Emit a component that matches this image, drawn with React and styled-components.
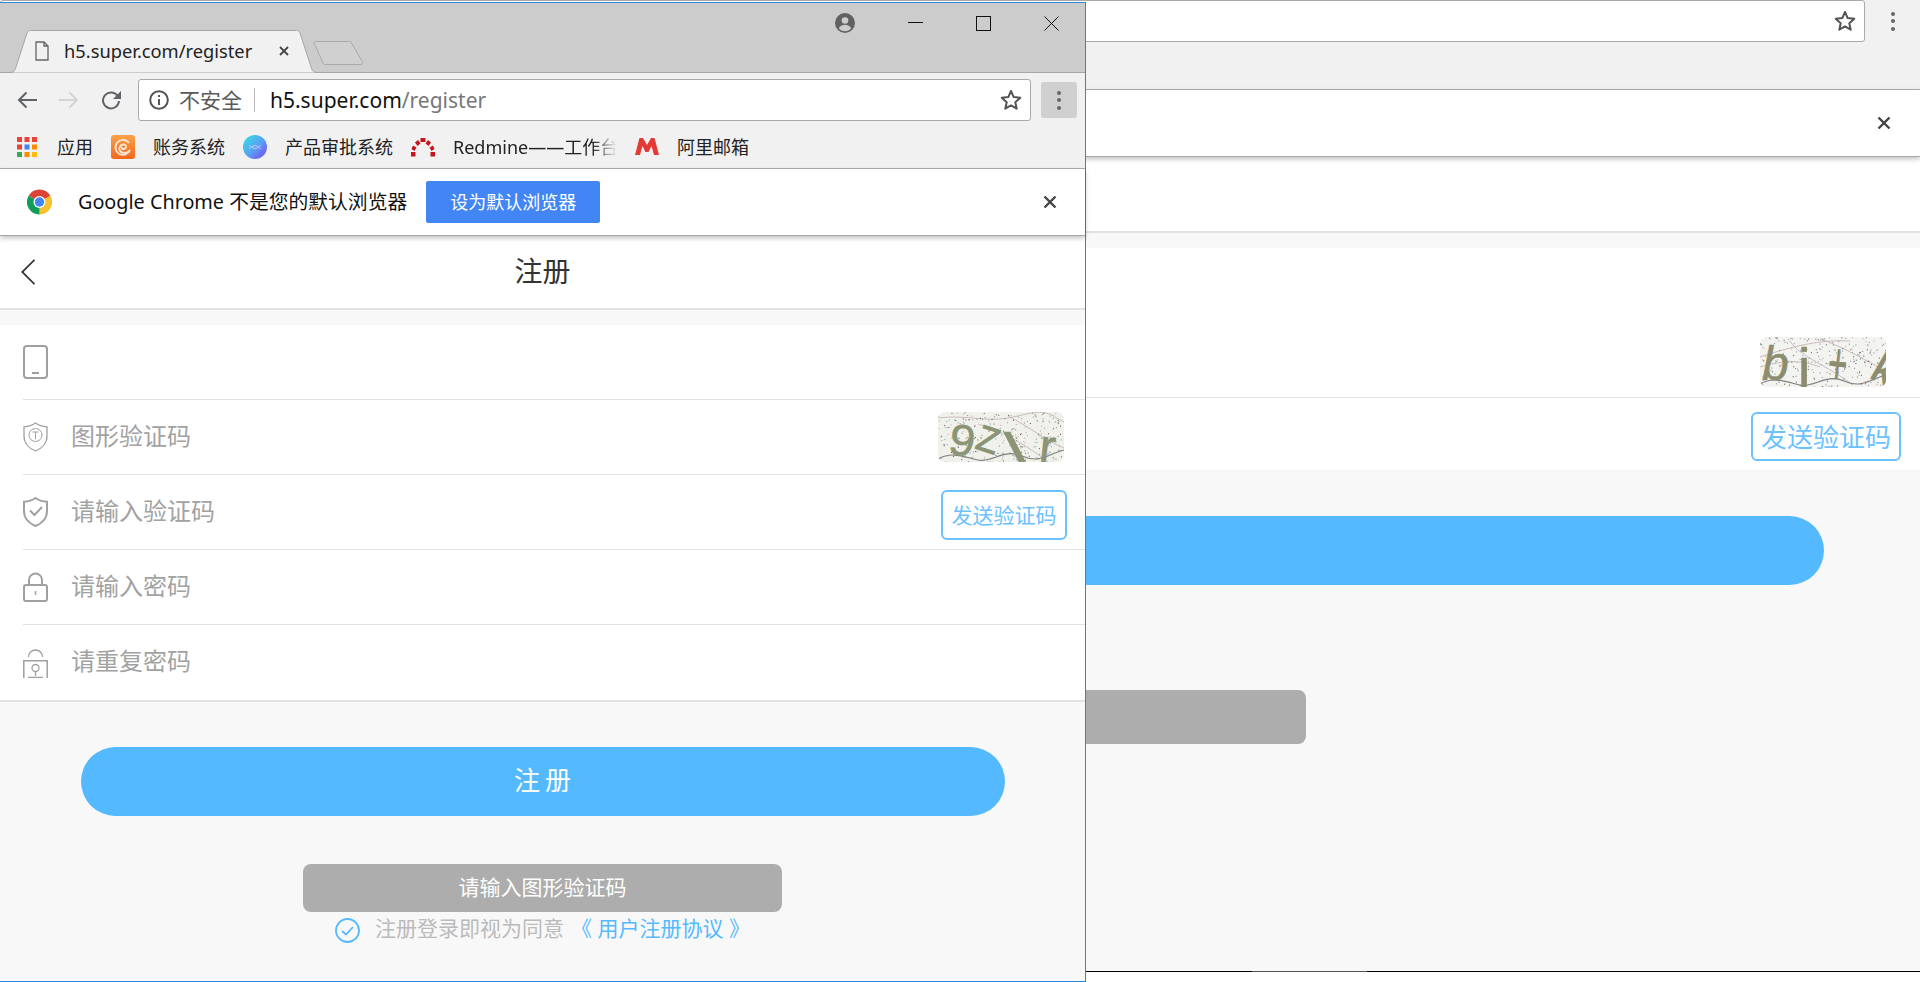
import React from 'react';
import styled, { createGlobalStyle } from 'styled-components';

const FONT = '"Noto Sans", "Noto Sans CJK SC", sans-serif';

const GlobalStyle = createGlobalStyle`
  html, body {
    margin: 0;
    padding: 0;
    background: #fff;
    overflow: hidden;
  }
  * { box-sizing: border-box; }
`;

const Desktop = styled.div`
  position: relative;
  width: 1920px;
  height: 982px;
  overflow: hidden;
  font-family: ${FONT};
  background: #fff;
`;

const BackWindow = styled.div`
  position: absolute;
  z-index: 1;
  left: 0;
  top: 0;
  width: 1920px;
  height: 972px;
  display: flex;
  flex-direction: column;
  background: #f8f8f8;
  border-bottom: 1px solid #000;
`;

const TaskbarNotch = styled.div`
  position: absolute;
  left: 1252px;
  bottom: -1px;
  width: 115px;
  height: 1px;
  background: #555;
`;

const FrontWindow = styled.div`
  position: absolute;
  z-index: 2;
  left: 0;
  top: 2px;
  width: 1086px;
  height: 980px;
  display: flex;
  flex-direction: column;
  background: #f8f8f8;
  border-top: 1px solid #2b8ae0;
  border-right: 1px solid #2b86d6;
  border-bottom: 1px solid #2b86d6;
`;

const TitleBar = styled.div`
  height: 70px;
  flex: none;
  display: flex;
  align-items: flex-end;
  background: #ccc;
  border-bottom: 1px solid #a6a6a6;
  padding-left: 9px;
`;

const Tab = styled.div`
  position: relative;
  width: 309px;
  height: 43px;
  margin-bottom: -1px;
  display: flex;
  align-items: center;
  padding: 0 29px 2px 26px;
  color: #222;
  font-size: 18.3px;
`;

const TabShape = styled.svg`
  position: absolute;
  left: 0;
  top: 0;
`;

const TabFile = styled.svg`
  position: relative;
  flex: none;
  margin-right: 15px;
`;

const TabText = styled.span`
  position: relative;
  flex: 1;
  white-space: nowrap;
`;

const TabClose = styled.svg`
  position: relative;
  flex: none;
`;

const NewTab = styled.svg`
  flex: none;
  margin: 0 0 7px -5px;
`;

const WindowControls = styled.div`
  margin-left: auto;
  align-self: flex-start;
  margin-top: 10px;
  padding-right: 26px;
  display: flex;
  align-items: center;
  gap: 53px;
`;

const NavRow = styled.div`
  flex: none;
  height: ${p => p.$back ? '90px' : '54px'};
  display: flex;
  align-items: center;
  gap: 10px;
  padding: ${p => p.$back ? '0 9px 47px 0' : '6px 8px 6px 17px'};
  background: #f1f1f1;
  border-bottom: ${p => p.$back ? '1px solid #b0b0b0' : 'none'};
`;

const NavButtons = styled.div`
  display: flex;
  align-items: center;
  gap: 22px;
  margin-right: 7px;
`;

const Omnibox = styled.div`
  flex: 1;
  height: 42px;
  display: flex;
  align-items: center;
  background: #fff;
  border: 1px solid #a9a9a9;
  border-radius: 3px;
  padding: 0 8px 0 10px;
`;

const Insecure = styled.span`
  margin-left: 10px;
  padding-bottom: 3px;
  font-size: 21px;
  color: #5a5a5a;
  white-space: nowrap;
`;

const OmniDivider = styled.span`
  width: 1px;
  height: 24px;
  margin: 0 15px 0 12px;
  background: #bbb;
`;

const Url = styled.span`
  font-size: 21px;
  color: #111;
  white-space: nowrap;
`;

const UrlPath = styled.span`
  color: #777;
`;

const StarIcon = styled.svg`
  margin-left: auto;
  flex: none;
`;

const MenuButton = styled.div`
  width: 36px;
  height: 36px;
  flex: none;
  display: flex;
  flex-direction: column;
  align-items: center;
  justify-content: center;
  gap: 3.5px;
  border-radius: 3px;
  background: ${p => p.$active ? '#d0d0d0' : 'transparent'};
`;

const MenuDot = styled.span`
  width: 4px;
  height: 4px;
  border-radius: 50%;
  background: #666;
`;

const Bookmarks = styled.div`
  flex: none;
  height: 42px;
  display: flex;
  align-items: center;
  gap: 18px;
  padding: 0 0 2px 17px;
  background: #f1f1f1;
  border-bottom: 1px solid #b0b0b0;
`;

const Bookmark = styled.div`
  display: flex;
  align-items: center;
  gap: ${p => p.$gap || 18}px;
  font-size: 18px;
  color: #222;
  white-space: nowrap;
`;

const BookmarkLabel = styled.span`
  padding-bottom: 1px;
`;

const FadedLabel = styled(BookmarkLabel)`
  display: block;
  width: 164px;
  overflow: hidden;
  -webkit-mask-image: linear-gradient(to right, #000 85%, transparent 100%);
  mask-image: linear-gradient(to right, #000 85%, transparent 100%);
`;

const InfoBar = styled.div`
  position: relative;
  z-index: 2;
  flex: none;
  height: 67px;
  display: flex;
  align-items: center;
  padding: 0 ${p => p.$back ? 29 : 28}px 0 27px;
  background: #fff;
  border-bottom: 1px solid #a8a8a8;
  box-shadow: 0 2px 5px rgba(0, 0, 0, 0.25);
`;

const InfoText = styled.span`
  margin-left: 26px;
  padding-bottom: 3px;
  font-size: 19.8px;
  color: #111;
  white-space: nowrap;
`;

const DefaultButton = styled.div`
  margin-left: 19px;
  width: 174px;
  height: 42px;
  display: flex;
  align-items: center;
  justify-content: center;
  padding-bottom: 2px;
  background: #4285f4;
  border-radius: 2px;
  color: #fff;
  font-size: 18px;
`;

const InfoClose = styled.div`
  margin-left: auto;
  flex: none;
  display: flex;
`;

const PageHeader = styled.div`
  flex: none;
  height: ${p => p.$back ? 76 : 74}px;
  display: grid;
  grid-template-columns: 1fr auto 1fr;
  align-items: center;
  padding: 0 0 0 21px;
  background: #fff;
  border-bottom: 2px solid #e2e2e2;
`;

const PageTitle = styled.div`
  font-size: 28px;
  color: #333;
  padding: 0 21px 5px 0;
`;

const Band = styled.div`
  flex: none;
  height: 15px;
  background: #f8f8f8;
`;

const Form = styled.div`
  flex: none;
  background: #fff;
  border-bottom: ${p => p.$back ? 'none' : '2px solid #e2e2e2'};
`;

const Row = styled.div`
  height: ${p => p.$h || 75}px;
  padding-left: 23px;
  display: flex;
`;

const RowInner = styled.div`
  flex: 1;
  display: flex;
  align-items: center;
  border-bottom: ${p => p.$last ? 'none' : '1px solid #e2e2e2'};
`;

const RowIcon = styled.svg`
  flex: none;
  margin-right: 23px;
`;

const Placeholder = styled.span`
  padding-bottom: 6px;
  font-size: 24px;
  color: #a2a2a2;
  white-space: nowrap;
`;

const CaptchaBox = styled.svg`
  flex: none;
  margin-left: auto;
  margin-right: ${p => p.$right}px;
  margin-top: ${p => p.$top}px;
  border-radius: 7px;
`;

const SendButton = styled.div`
  flex: none;
  margin-left: auto;
  margin-right: ${p => p.$big ? 19 : 18}px;
  margin-top: 5px;
  width: ${p => p.$big ? 150 : 126}px;
  height: ${p => p.$big ? 49 : 50}px;
  display: flex;
  align-items: center;
  justify-content: center;
  padding-bottom: ${p => p.$big ? 1 : 2}px;
  border: 2px solid #6cc1ff;
  border-radius: 6px;
  color: #6cc1ff;
  background: #fff;
  font-size: ${p => p.$big ? 26 : 21}px;
  white-space: nowrap;
`;

const Actions = styled.div`
  flex: 1;
  display: flex;
  flex-direction: column;
  align-items: center;
`;

const PrimaryButton = styled.div`
  width: ${p => p.$w}px;
  height: 69px;
  margin-top: ${p => p.$mt}px;
  display: flex;
  align-items: center;
  justify-content: center;
  padding-bottom: 6px;
  background: #55b9ff;
  border-radius: 35px;
  color: #fff;
  font-size: 26px;
  letter-spacing: 5px;
  text-indent: 5px;
`;

const HintButton = styled.div`
  width: ${p => p.$w}px;
  height: ${p => p.$h}px;
  margin-top: ${p => p.$mt}px;
  display: flex;
  align-items: center;
  justify-content: center;
  padding-bottom: 5px;
  background: #adadad;
  border-radius: 8px;
  color: #fff;
  font-size: 21px;
`;

const Agreement = styled.div`
  height: 25px;
  margin-top: 6px;
  display: flex;
  align-items: center;
  font-size: 21px;
  line-height: 25px;
  color: #bbb;
  white-space: nowrap;
`;

const AgreeText = styled.span`
  padding-bottom: 5px;
`;

const AgreeCheck = styled.svg`
  flex: none;
  margin-right: 15px;
`;

const AgreeLink = styled(AgreeText)`
  color: #55b9ff;
  margin-left: 7px;
`;

// seeded so the captcha speckle stays the same between runs
const speckle = (seed, count) => {
  let s = seed;
  const next = () => {
    s = (s * 16807) % 2147483647;
    return s / 2147483647;
  };
  return Array.from({ length: count }, () => ({
    x: next() * 126,
    y: next() * 50,
    c: ['#555', '#8a7f96', '#b8a4a4', '#7a9aa0'][Math.floor(next() * 4)],
  }));
};

const Captcha = ({ seed, bg, ink, right, top = 0, glyphs, lines }) => (
  <CaptchaBox $right={right} $top={top} width="126" height="50" viewBox="0 0 126 50">
    <rect width="126" height="50" fill={bg} />
    {lines.map((d, i) => <path key={i} d={d} fill="none" stroke="#c9bcbc" strokeWidth="1" />)}
    {speckle(seed, 260).map((p, i) => <rect key={i} x={p.x} y={p.y} width="1" height="1" fill={p.c} />)}
    <path d="M0 47C14 39 26 45 40 48S66 36 84 44 110 42 126 38" fill="none" stroke="#7f7f7f" strokeWidth="1.2" />
    {glyphs.map(g => (
      <text
        key={g.t + g.x}
        transform={`translate(${g.x} ${g.y}) rotate(${g.r}) scale(${g.sx || 1} 1)`}
        fontFamily="Liberation Sans, sans-serif"
        fontStyle={g.italic ? 'italic' : 'normal'}
        fontSize={g.s}
        fill={ink}
        stroke={ink}
        strokeWidth={g.w || 0.6}
      >
        {g.t}
      </text>
    ))}
  </CaptchaBox>
);

const FRONT_LINES = ['M0 6C30 2 50 12 80 4S110 2 126 10', 'M70 4C90 14 110 30 126 36', 'M40 12C66 20 90 34 110 50'];
const BACK_LINES = ['M0 20C30 10 60 2 90 4', 'M60 2C84 10 110 26 126 34', 'M30 4C40 20 70 30 90 46', 'M0 30C20 24 40 22 60 30'];

const FRONT_GLYPHS = [
  { t: '9', x: 9, y: 41, r: 10, s: 44, sx: 1.05 },
  { t: 'Z', x: 36, y: 36, r: 18, s: 36, w: 1 },
  { t: '\\', x: 66, y: 50, r: 0, s: 40, sx: 1.9 },
  { t: 'r', x: 100, y: 50, r: 6, s: 48 },
];

const BACK_GLYPHS = [
  { t: 'b', x: 2, y: 43, r: 0, s: 48, italic: true },
  { t: 'i', x: 38, y: 50, r: 0, s: 56 },
  { t: '+', x: 66, y: 46, r: 6, s: 60, sx: 0.55 },
  { t: 'k', x: 108, y: 40, r: 30, s: 44 },
];

const AppsIcon = () => {
  const colors = ['#ea4335', '#ea4335', '#ea4335', '#ea4335', '#4285f4', '#fb8c00', '#34a853', '#fb8c00', '#fbbc05'];
  return (
    <svg width="20" height="20" viewBox="0 0 20 20">
      {colors.map((c, i) => (
        <rect key={i} x={(i % 3) * 7.5} y={Math.floor(i / 3) * 7.5} width="5" height="5" fill={c} />
      ))}
    </svg>
  );
};

const OrangeIcon = () => (
  <svg width="24" height="24" viewBox="0 0 24 24">
    <defs>
      <linearGradient id="orangeFill" x1="0" y1="0" x2="0" y2="1">
        <stop offset="0" stopColor="#f9a24a" />
        <stop offset="1" stopColor="#f4661c" />
      </linearGradient>
    </defs>
    <rect width="24" height="24" rx="3" fill="url(#orangeFill)" />
    <path d="M18 8a7.5 7.5 0 1 0 1 7c-2 3-7 4-9.5 1.5S9 10 12 9.5s4 2.5 2 4-4 0-3-1.5" fill="none" stroke="#fff" strokeWidth="1.8" opacity="0.8" />
  </svg>
);

const OrbIcon = () => (
  <svg width="24" height="24" viewBox="0 0 24 24">
    <defs>
      <linearGradient id="orbFill" x1="0" y1="0" x2="1" y2="1">
        <stop offset="0" stopColor="#33e6e0" />
        <stop offset="0.55" stopColor="#5a9df5" />
        <stop offset="1" stopColor="#7a3ff2" />
      </linearGradient>
    </defs>
    <circle cx="12" cy="12" r="12" fill="url(#orbFill)" />
    <path d="M6 10.5c2 0 3 3 6 3s4-3 6-3M6 13.5c2 0 3-3 6-3s4 3 6 3" fill="none" stroke="#b9c6ff" strokeWidth="1" />
  </svg>
);

const RedmineIcon = () => (
  <svg width="24" height="20" viewBox="0 0 24 20">
    <g fill="#c4161c">
      <path d="M0 15h4.500v4.500H0z" />
      <path d="M2 8.500l3.500 2-2 3.500L.5 12z" />
      <path d="M7 3l2.500 3.500L6.500 9 4 5.500z" />
      <path d="M9.500 1h5v4h-5z" />
      <path d="M17 3l3 2.500L17.500 9l-3-2.500z" />
      <path d="M22 8.500l1.500 3.500-3 2-2-3.500z" />
      <path d="M19.500 15H24v4.500h-4.500z" />
    </g>
  </svg>
);

const MailIcon = () => (
  <svg width="24" height="17" viewBox="0 0 24 17">
    <path d="M4.500 0L0 17h5l2.500-9 3 6h3l3-6 2.500 9h5L19.500 0h-3.500L12 7 8 0z" fill="#e53935" />
  </svg>
);

const ChromeLogo = () => (
  <svg width="25" height="26" viewBox="0 0 48 48">
    <path d="M24 24L3.200 12A24 24 0 0 1 44.800 12z" fill="#db4437" />
    <path d="M24 24L44.800 12A24 24 0 0 1 24 48z" fill="#fbc02d" />
    <path d="M24 24L24 48A24 24 0 0 1 3.200 12z" fill="#0f9d58" />
    <circle cx="24" cy="24" r="11.500" fill="#fff" />
    <circle cx="24" cy="24" r="9" fill="#4285f4" />
  </svg>
);

const CloseCross = ({ size, color = '#444', weight = 2.4 }) => (
  <svg width={size} height={size} viewBox="0 0 14 14">
    <path d="M1.500 1.500l11 11M12.500 1.500l-11 11" stroke={color} strokeWidth={weight} fill="none" />
  </svg>
);

const Star = () => (
  <StarIcon width="22" height="22" viewBox="0 0 22 22">
    <path d="M11 2l2.700 6.100 6.600.7-5 4.400 1.400 6.500L11 16.400 5.300 19.700l1.400-6.500-5-4.400 6.600-.7z" fill="none" stroke="#555" strokeWidth="2" strokeLinejoin="round" />
  </StarIcon>
);

const Menu = ({ active }) => (
  <MenuButton $active={active}>
    <MenuDot />
    <MenuDot />
    <MenuDot />
  </MenuButton>
);

const Chevron = () => (
  <svg width="14" height="26" viewBox="0 0 14 26">
    <path d="M13.500 .8L1.200 13l12.300 12.200" fill="none" stroke="#333" strokeWidth="1.800" />
  </svg>
);

const BrowserChrome = () => (
  <>
    <TitleBar>
      <Tab>
        <TabShape width="309" height="43" viewBox="0 0 309 43">
          <path d="M0 42.500h1c3 0 4.500-1 5.500-4L18 3c.8-2 2-2.500 3.500-2.500h266c1.500 0 2.700.5 3.500 2.500l11.500 35.500c1 3 2.500 4 5.500 4h1" fill="#f1f1f1" stroke="#a6a6a6" />
        </TabShape>
        <TabFile width="14" height="20" viewBox="0 0 14 20">
          <path d="M1 1h8l4 4v14H1zM9 1v4h4" fill="#f1f1f1" stroke="#666" strokeWidth="1.300" />
        </TabFile>
        <TabText>h5.super.com/register</TabText>
        <TabClose width="10" height="10" viewBox="0 0 10 10">
          <path d="M1 1l8 8M9 1L1 9" stroke="#444" strokeWidth="1.800" />
        </TabClose>
      </Tab>
      <NewTab width="51" height="24" viewBox="0 0 51 24">
        <path d="M1 1.500C1 1 1.500 .5 2.500 .5h34c1 0 1.600.5 2 1.500l11 19c.5 1.500 0 2.500-1.500 2.500H12c-1 0-1.500-.5-2-1.500z" fill="#d0d0d0" stroke="#aaa" />
      </NewTab>
      <WindowControls>
        <svg width="20" height="20" viewBox="0 0 20 20">
          <circle cx="10" cy="10" r="10" fill="#616161" />
          <circle cx="10" cy="7.500" r="3.300" fill="#ccc" />
          <path d="M3.800 15.200c1.500-2.500 4-3.400 6.200-3.400s4.700.9 6.200 3.400c-1.500 1.800-3.700 3-6.200 3s-4.700-1.200-6.200-3z" fill="#ccc" />
        </svg>
        <svg width="15" height="15" viewBox="0 0 15 15">
          <path d="M0 6.500h15" stroke="#111" strokeWidth="1" />
        </svg>
        <svg width="15" height="15" viewBox="0 0 15 15">
          <rect x=".5" y=".5" width="14" height="14" fill="none" stroke="#111" />
        </svg>
        <svg width="15" height="15" viewBox="0 0 15 15">
          <path d="M.5 .5l14 14M14.500 .5l-14 14" stroke="#111" strokeWidth="1" />
        </svg>
      </WindowControls>
    </TitleBar>
    <NavRow>
      <NavButtons>
        <svg width="20" height="18" viewBox="0 0 20 18">
          <path d="M20 9H2M9.500 1.500L2 9l7.500 7.500" fill="none" stroke="#5f6368" strokeWidth="2" />
        </svg>
        <svg width="20" height="18" viewBox="0 0 20 18">
          <path d="M0 9h18M10.500 1.500L18 9l-7.500 7.500" fill="none" stroke="#d4d4d4" strokeWidth="2" />
        </svg>
        <svg width="20" height="20" viewBox="0 0 20 20">
          <path d="M17 6.500A8 8 0 1 0 18 11" fill="none" stroke="#5f6368" strokeWidth="2" />
          <path d="M20 1v8h-8z" fill="#5f6368" />
        </svg>
      </NavButtons>
      <Omnibox>
        <svg width="20" height="20" viewBox="0 0 20 20">
          <circle cx="10" cy="10" r="8.800" fill="none" stroke="#555" strokeWidth="2" />
          <path d="M9 9h2v6H9zM9 5h2v2H9z" fill="#555" />
        </svg>
        <Insecure>不安全</Insecure>
        <OmniDivider />
        <Url>h5.super.com<UrlPath>/register</UrlPath></Url>
        <Star />
      </Omnibox>
      <Menu active />
    </NavRow>
    <Bookmarks>
      <Bookmark $gap={20}><AppsIcon /><BookmarkLabel>应用</BookmarkLabel></Bookmark>
      <Bookmark><OrangeIcon /><BookmarkLabel>账务系统</BookmarkLabel></Bookmark>
      <Bookmark><OrbIcon /><BookmarkLabel>产品审批系统</BookmarkLabel></Bookmark>
      <Bookmark><RedmineIcon /><FadedLabel>Redmine——工作台</FadedLabel></Bookmark>
      <Bookmark><MailIcon /><BookmarkLabel>阿里邮箱</BookmarkLabel></Bookmark>
    </Bookmarks>
    <InfoBar>
      <ChromeLogo />
      <InfoText>Google Chrome 不是您的默认浏览器</InfoText>
      <DefaultButton>设为默认浏览器</DefaultButton>
      <InfoClose><CloseCross size={14} /></InfoClose>
    </InfoBar>
  </>
);

const PhoneIcon = () => (
  <RowIcon width="25" height="34" viewBox="0 0 25 34">
    <rect x="1" y="1" width="23" height="32" rx="3" fill="none" stroke="#a0a0a0" strokeWidth="2" />
    <path d="M9 28h7" stroke="#a0a0a0" strokeWidth="2" />
  </RowIcon>
);

const ShieldIcon = ({ bold, children }) => (
  <RowIcon width="25" height="30" viewBox="0 0 25 30">
    <path d="M12.500 1C9 3.500 5 4.500 1 4.800V14c0 7 5 12.500 11.500 15C19 26.500 24 21 24 14V4.800C20 4.500 16 3.500 12.500 1z" fill="none" stroke="#a0a0a0" strokeWidth={bold ? 2 : 1.300} />
    {children}
  </RowIcon>
);

const LockIcon = () => (
  <RowIcon width="25" height="30" viewBox="0 0 25 30">
    <path d="M6 13V8a6.500 6.500 0 0 1 13 0v5" fill="none" stroke="#a0a0a0" strokeWidth="2" />
    <rect x="1" y="13" width="23" height="16" rx="2" fill="none" stroke="#a0a0a0" strokeWidth="2" />
    <path d="M12.500 19v4" stroke="#a0a0a0" strokeWidth="1.500" />
  </RowIcon>
);

const OpenLockIcon = () => (
  <RowIcon width="25" height="30" viewBox="0 0 25 30">
    <path d="M5.500 9a7 7 0 0 1 14 0" fill="none" stroke="#a0a0a0" strokeWidth="1.300" />
    <path d="M.8 30V12.800h23.400V30M5 29.400h15" fill="none" stroke="#a0a0a0" strokeWidth="1.500" />
    <circle cx="12.500" cy="20" r="3.500" fill="none" stroke="#a0a0a0" strokeWidth="1.300" />
    <path d="M12.500 23.500V28" stroke="#a0a0a0" strokeWidth="1.300" />
  </RowIcon>
);

const App = () => (
  <>
    <GlobalStyle />
    <Desktop>
      <BackWindow>
        <NavRow $back>
          <Omnibox>
            <Star />
          </Omnibox>
          <Menu />
        </NavRow>
        <InfoBar $back>
          <InfoClose><CloseCross size={14} /></InfoClose>
        </InfoBar>
        <PageHeader $back />
        <Band />
        <Form $back>
          <Row />
          <Row>
            <RowInner>
              <Captcha seed={77} bg="#f3f3ef" ink="#8c8d6e" right={34} top={4} glyphs={BACK_GLYPHS} lines={BACK_LINES} />
            </RowInner>
          </Row>
          <Row $h={72}>
            <RowInner $last>
              <SendButton $big>发送验证码</SendButton>
            </RowInner>
          </Row>
        </Form>
        <Actions>
          <PrimaryButton $w={1728} $mt={46} />
          <HintButton $w={692} $h={54} $mt={105} />
        </Actions>
        <TaskbarNotch />
      </BackWindow>

      <FrontWindow>
        <BrowserChrome />
        <PageHeader>
          <Chevron />
          <PageTitle>注册</PageTitle>
        </PageHeader>
        <Band />
        <Form>
          <Row>
            <RowInner><PhoneIcon /></RowInner>
          </Row>
          <Row>
            <RowInner>
              <ShieldIcon>
                <circle cx="12.500" cy="13" r="6.500" fill="none" stroke="#a0a0a0" strokeWidth="1" />
                <path d="M9.500 10h6M12.500 10v7" stroke="#a0a0a0" strokeWidth="1" />
              </ShieldIcon>
              <Placeholder>图形验证码</Placeholder>
              <Captcha seed={31} bg="#f0f1ea" ink="#8b9474" right={21} glyphs={FRONT_GLYPHS} lines={FRONT_LINES} />
            </RowInner>
          </Row>
          <Row>
            <RowInner>
              <ShieldIcon bold>
                <path d="M7 13.500l4.500 4.500L19 10" fill="none" stroke="#a0a0a0" strokeWidth="2" />
              </ShieldIcon>
              <Placeholder>请输入验证码</Placeholder>
              <SendButton>发送验证码</SendButton>
            </RowInner>
          </Row>
          <Row>
            <RowInner>
              <LockIcon />
              <Placeholder>请输入密码</Placeholder>
            </RowInner>
          </Row>
          <Row>
            <RowInner $last>
              <OpenLockIcon />
              <Placeholder>请重复密码</Placeholder>
            </RowInner>
          </Row>
        </Form>
        <Actions>
          <PrimaryButton $w={924} $mt={45}>注册</PrimaryButton>
          <HintButton $w={479} $h={48} $mt={48}>请输入图形验证码</HintButton>
          <Agreement>
            <AgreeCheck width="25" height="25" viewBox="0 0 25 25">
              <circle cx="12.500" cy="12.500" r="11.500" fill="none" stroke="#55b9ff" strokeWidth="1.800" />
              <path d="M7 13l4 3.500 7-7.500" fill="none" stroke="#55b9ff" strokeWidth="1.800" />
            </AgreeCheck>
            <AgreeText>注册登录即视为同意</AgreeText>
            <AgreeLink>《 用户注册协议 》</AgreeLink>
          </Agreement>
        </Actions>
      </FrontWindow>
    </Desktop>
  </>
);

export default App;
